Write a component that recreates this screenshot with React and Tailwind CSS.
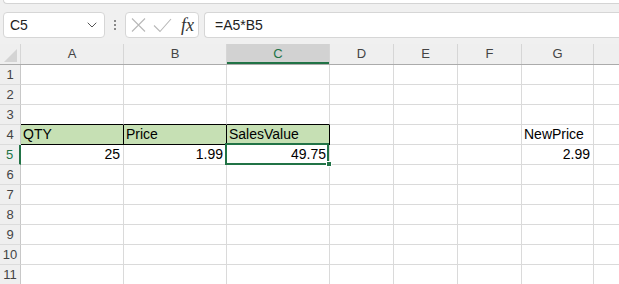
import { ChevronDown } from 'lucide-react'

const COLS = [
  { key: 'A', w: 'w-[103px]' },
  { key: 'B', w: 'w-[103px]' },
  { key: 'C', w: 'w-[103px]' },
  { key: 'D', w: 'w-[64px]' },
  { key: 'E', w: 'w-[64px]' },
  { key: 'F', w: 'w-[64px]' },
  { key: 'G', w: 'w-[72px]' },
  { key: 'H', w: 'w-[64px]', hidden: true },
]

const CELLS = {
  A4: { text: 'QTY', green: true },
  B4: { text: 'Price', green: true },
  C4: { text: 'SalesValue', green: true },
  A5: { text: '25', right: true },
  B5: { text: '1.99', right: true },
  C5: { text: '49.75', right: true },
  G4: { text: 'NewPrice' },
  G5: { text: '2.99', right: true },
}

function FormulaBar() {
  return (
    <div className="bg-[#f0f0f0] h-[44px] flex flex-col">
      <div className="h-[4px] ml-[3px] bg-white border-l border-b border-[#d4d4d4] rounded-bl-[4px]" />
      <div className="flex items-center mt-[8px] pl-[3px]">
        <div className="w-[102px] h-[26px] bg-white border border-[#d6d6d6] rounded-[4px] flex items-center justify-between pl-[6px] pr-[4px]">
          <span className="text-[14px] text-[#222]">C5</span>
          <ChevronDown size={16} strokeWidth={1.5} className="text-[#555]" />
        </div>
        <div className="w-[20px] flex flex-col items-center gap-[2px]">
          <span className="w-[2px] h-[2px] bg-[#888]" />
          <span className="w-[2px] h-[2px] bg-[#888]" />
          <span className="w-[2px] h-[2px] bg-[#888]" />
        </div>
        <div className="w-[74px] h-[26px] bg-white border border-[#d6d6d6] rounded-[4px] flex items-center pl-[5px] pr-[4px]">
          <svg width="42" height="16" viewBox="0 0 42 16" className="shrink-0">
            <path d="M1 1.5 L14 14.5 M14 1.5 L1 14.5" stroke="#b8b8b8" strokeWidth="1.1" fill="none" />
            <path d="M23 8.5 L29 14.5 L40 2" stroke="#b8b8b8" strokeWidth="1.1" fill="none" />
          </svg>
          <span className="ml-auto text-[18px] italic text-[#333] font-['Liberation_Serif'] leading-none">fx</span>
        </div>
        <div className="ml-[5px] flex-1 h-[26px] bg-white border border-[#d6d6d6] rounded-l-[4px] border-r-0 flex items-center pl-[10px]">
          <span className="text-[14px] text-[#222]">=A5*B5</span>
        </div>
      </div>
    </div>
  )
}

function HeaderRow() {
  return (
    <div className="flex h-[21px] bg-[#efefef] border-b border-[#ababab]">
      <div className="w-[21px] shrink-0 border-r border-[#d6d6d6] relative">
        <div className="absolute right-[3px] bottom-[2px] w-0 h-0 border-l-[13px] border-l-transparent border-b-[13px] border-b-[#d4d4d4]" />
      </div>
      {COLS.map(c => (
        <div
          key={c.key}
          className={`${c.w} shrink-0 flex items-center justify-center text-[13px] border-r border-[#d6d6d6] ${
            c.key === 'C'
              ? 'bg-[#d2d2d2] text-[#217346] shadow-[inset_0_-2px_0_#217346]'
              : 'text-[#444]'
          }`}
        >
          {c.hidden ? '' : c.key}
        </div>
      ))}
    </div>
  )
}

function Row({ n }) {
  const sel = n === 5
  return (
    <div className="flex h-[20px]">
      <div
        className={`w-[21px] shrink-0 bg-[#efefef] border-b border-[#dcdcdc] flex items-center justify-center text-[13px] ${
          sel ? 'text-[#217346] border-r-2 border-r-[#217346]' : 'text-[#444] border-r border-r-[#c8c8c8]'
        }`}
      >
        {n}
      </div>
      {COLS.map(c => {
        const id = `${c.key}${n}`
        const cell = CELLS[id]
        const inBox = ['A', 'B', 'C'].includes(c.key)
        const blackRight = n === 4 && inBox
        const blackBottom = (n === 4 || n === 3) && inBox
        return (
          <div
            key={id}
            className={`${c.w} shrink-0 flex items-end pb-[1px] pl-[2px] pr-[3px] text-[14px] text-black leading-[17px] border-r border-b ${
              blackRight ? 'border-r-black' : 'border-r-[#dadada]'
            } ${blackBottom ? 'border-b-black' : 'border-b-[#dadada]'} ${
              cell?.green ? 'bg-[#c6e0b4]' : 'bg-white'
            } ${cell?.right ? 'justify-end' : ''}`}
          >
            {cell?.text}
          </div>
        )
      })}
    </div>
  )
}

export default function App() {
  const rows = Array.from({ length: 11 }, (_, i) => i + 1)
  return (
    <div className="w-[619px] h-[284px] overflow-hidden bg-white font-['Liberation_Sans',sans-serif] relative">
      <FormulaBar />
      <HeaderRow />
      {rows.map(n => (
        <Row key={n} n={n} />
      ))}
      {/* selection on C5 */}
      <div className="absolute left-[225px] top-[143px] w-[104px] h-[22px] border-2 border-[#217346] pointer-events-none" />
      <div className="absolute left-[326px] top-[161px] w-[6px] h-[6px] bg-[#217346] border border-white pointer-events-none" />
    </div>
  )
}
